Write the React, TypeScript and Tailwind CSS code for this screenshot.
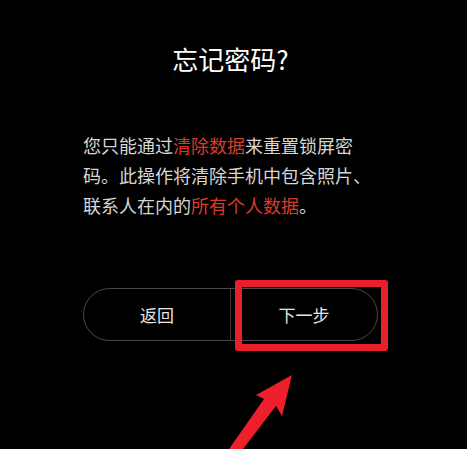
import React from "react";

export default function App() {
  const font = { fontFamily: '"Noto Sans CJK SC", "Noto Sans", sans-serif' };
  return (
    <div
      className="relative w-[467px] h-[449px] bg-black overflow-hidden"
      style={font}
    >
      <div className="flex flex-col w-[295px] ml-[83px]">
        <h1 className="mt-[44px] text-center text-[26px] leading-[30px] text-white font-normal">
          忘记密码?
        </h1>
        <p className="mt-[56px] text-[18px] leading-[30px] text-[#d6d6d6] whitespace-nowrap">
          您只能通过<span className="text-[#d93b2b]">清除数据</span>来重置锁屏密
          <br />
          码。此操作将清除手机中包含照片、
          <br />
          联系人在内的<span className="text-[#d93b2b]">所有个人数据</span>。
        </p>
        <div className="mt-[68px] flex h-[53px] rounded-full border border-[#4a4a4a]">
          <div className="flex-1 flex items-center justify-center text-[17px] text-[#e6e6e6]">
            返回
          </div>
          <div className="w-px bg-[#3a3a3a]" />
          <div className="flex-1 flex items-center justify-center text-[17px] text-[#e6e6e6]">
            下一步
          </div>
        </div>
      </div>

      {/* annotation: red highlight box */}
      <div className="absolute left-[235px] top-[280px] w-[153px] h-[71px] border-[7px] border-[#e8202b] rounded-[3px]" />

      {/* annotation: red arrow */}
      <svg
        className="absolute left-0 top-0"
        width="467"
        height="449"
        viewBox="0 0 467 449"
      >
        <polygon
          points="292,375 256,395 264,399 229,449 243,449 276,406 282,416"
          fill="#ec1f2a"
        />
      </svg>
    </div>
  );
}
